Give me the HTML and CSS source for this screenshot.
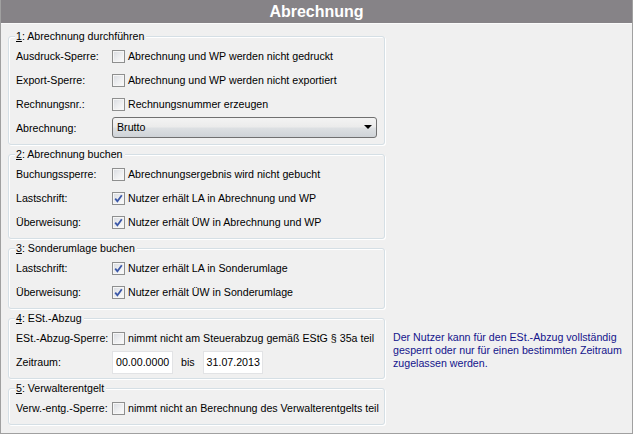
FILE: index.html
```html
<!DOCTYPE html>
<html lang="de">
<head>
<meta charset="utf-8">
<title>Abrechnung</title>
<link rel="stylesheet" href="styles.css">
</head>
<body>
<div class="window">
  <div class="titlebar">Abrechnung</div>
  <div class="content">
    <section class="group g1">
      <div class="legend"><u>1</u>: Abrechnung durchführen</div>
      <div class="row"><span class="label">Ausdruck-Sperre:</span><span class="cb"></span><span class="text">Abrechnung und WP werden nicht gedruckt</span></div>
      <div class="row"><span class="label">Export-Sperre:</span><span class="cb"></span><span class="text">Abrechnung und WP werden nicht exportiert</span></div>
      <div class="row"><span class="label">Rechnungsnr.:</span><span class="cb"></span><span class="text">Rechnungsnummer erzeugen</span></div>
      <div class="row"><span class="label">Abrechnung:</span><div class="select"><span class="value">Brutto</span><span class="arrow"></span></div></div>
    </section>
    <section class="group g2">
      <div class="legend"><u>2</u>: Abrechnung buchen</div>
      <div class="row"><span class="label">Buchungssperre:</span><span class="cb"></span><span class="text">Abrechnungsergebnis wird nicht gebucht</span></div>
      <div class="row"><span class="label">Lastschrift:</span><span class="cb checked"><svg viewBox="0 0 9 9" width="9" height="9"><path d="M1.2 4.6 L3.4 7.2 L7.8 1.2" fill="none" stroke="#3b58a8" stroke-width="1.8"/></svg></span><span class="text">Nutzer erhält LA in Abrechnung und WP</span></div>
      <div class="row"><span class="label">Überweisung:</span><span class="cb checked"><svg viewBox="0 0 9 9" width="9" height="9"><path d="M1.2 4.6 L3.4 7.2 L7.8 1.2" fill="none" stroke="#3b58a8" stroke-width="1.8"/></svg></span><span class="text">Nutzer erhält ÜW in Abrechnung und WP</span></div>
    </section>
    <section class="group g3">
      <div class="legend"><u>3</u>: Sonderumlage buchen</div>
      <div class="row"><span class="label">Lastschrift:</span><span class="cb checked"><svg viewBox="0 0 9 9" width="9" height="9"><path d="M1.2 4.6 L3.4 7.2 L7.8 1.2" fill="none" stroke="#3b58a8" stroke-width="1.8"/></svg></span><span class="text">Nutzer erhält LA in Sonderumlage</span></div>
      <div class="row"><span class="label">Überweisung:</span><span class="cb checked"><svg viewBox="0 0 9 9" width="9" height="9"><path d="M1.2 4.6 L3.4 7.2 L7.8 1.2" fill="none" stroke="#3b58a8" stroke-width="1.8"/></svg></span><span class="text">Nutzer erhält ÜW in Sonderumlage</span></div>
    </section>
    <section class="group g4">
      <div class="legend"><u>4</u>: ESt.-Abzug</div>
      <div class="row"><span class="label">ESt.-Abzug-Sperre:</span><span class="cb"></span><span class="text">nimmt nicht am Steuerabzug gemäß EStG § 35a teil</span></div>
      <div class="row"><span class="label">Zeitraum:</span><span class="input in1">00.00.0000</span><span class="bis">bis</span><span class="input in2">31.07.2013</span></div>
    </section>
    <div class="info">Der Nutzer kann für den ESt.-Abzug vollständig<br>gesperrt oder nur für einen bestimmten Zeitraum<br>zugelassen werden.</div>
    <section class="group g5">
      <div class="legend"><u>5</u>: Verwalterentgelt</div>
      <div class="row"><span class="label">Verw.-entg.-Sperre:</span><span class="cb"></span><span class="text">nimmt nicht an Berechnung des Verwalterentgelts teil</span></div>
    </section>
  </div>
</div>
</body>
</html>
```
FILE: styles.css
```css
html, body {
  margin: 0;
  padding: 0;
  background: #f0f0f0;
}
body {
  font-family: "Liberation Sans", Arial, sans-serif;
  font-size: 10.65px;
  color: #000;
}
.window {
  width: 633px;
  height: 434px;
  box-sizing: border-box;
  border-left: 1px solid #a0a0a0;
  border-right: 1px solid #a0a0a0;
  border-bottom: 1px solid #a0a0a0;
  background: #f0f0f0;
  overflow: hidden;
}
.titlebar {
  height: 24px;
  margin: 0 -1px;
  background: #868387;
  color: #fff;
  font-weight: bold;
  font-size: 16px;
  line-height: 24px;
  text-align: center;
  border-bottom: 1px solid #fafafa;
  box-sizing: border-box;
}
.content {
  display: grid;
  grid-template-columns: 377px auto;
  column-gap: 8px;
  row-gap: 9px;
  padding: 12px 0 0 7px;
  align-items: start;
}
.group {
  grid-column: 1;
  border: 1px solid #d5dfe5;
  border-radius: 3px;
  box-shadow: inset 1px 1px 0 #fff, 1px 1px 0 #fff;
  padding: 0 0 4px 0;
}
.g1 { grid-row: 1; }
.g2 { grid-row: 2; }
.g3 { grid-row: 3; }
.g4 { grid-row: 4; }
.g5 { grid-row: 5; }
.legend {
  display: table;
  margin: -8px 0 1px 6px;
  padding: 0 2px 0 1px;
  line-height: 14px;
  height: 14px;
  background: #f0f0f0;
}
.legend u {
  text-decoration: underline;
}
.row {
  display: flex;
  align-items: center;
  height: 24px;
  padding-left: 7px;
}
.label {
  width: 96px;
  flex: none;
  white-space: nowrap;
}
.cb {
  width: 13px;
  height: 13px;
  box-sizing: border-box;
  flex: none;
  border: 1px solid #8e8f8f;
  background: linear-gradient(135deg, #d8dbe0 0%, #eeeff1 55%, #fbfbfb 100%);
  box-shadow: inset 0 0 0 1px #f6f6f6;
  display: flex;
  align-items: center;
  justify-content: center;
  margin-right: 3px;
}
.cb svg {
  display: block;
}
.text {
  white-space: nowrap;
}
.select {
  width: 265px;
  height: 21px;
  box-sizing: border-box;
  border: 1px solid #707070;
  border-radius: 3px;
  background: linear-gradient(#f3f3f3 0%, #ebebeb 48%, #dde0e3 52%, #cfd3d7 100%);
  display: flex;
  align-items: center;
  justify-content: space-between;
  padding: 0 4px 0 4px;
  margin-top: -2px;
}
.arrow {
  width: 0;
  height: 0;
  border-left: 4px solid transparent;
  border-right: 4px solid transparent;
  border-top: 4px solid #000;
}
.input {
  height: 23px;
  box-sizing: border-box;
  background: #fff;
  border: 1px solid #e2e3e5;
  display: flex;
  align-items: center;
  padding-left: 3px;
  white-space: nowrap;
}
.in1 { width: 61px; }
.in2 { width: 60px; }
.bis {
  margin: 0 8px 0 8px;
}
.info {
  grid-column: 2;
  grid-row: 4;
  padding-top: 13px;
  line-height: 13px;
  color: #14148c;
  white-space: nowrap;
}
```
